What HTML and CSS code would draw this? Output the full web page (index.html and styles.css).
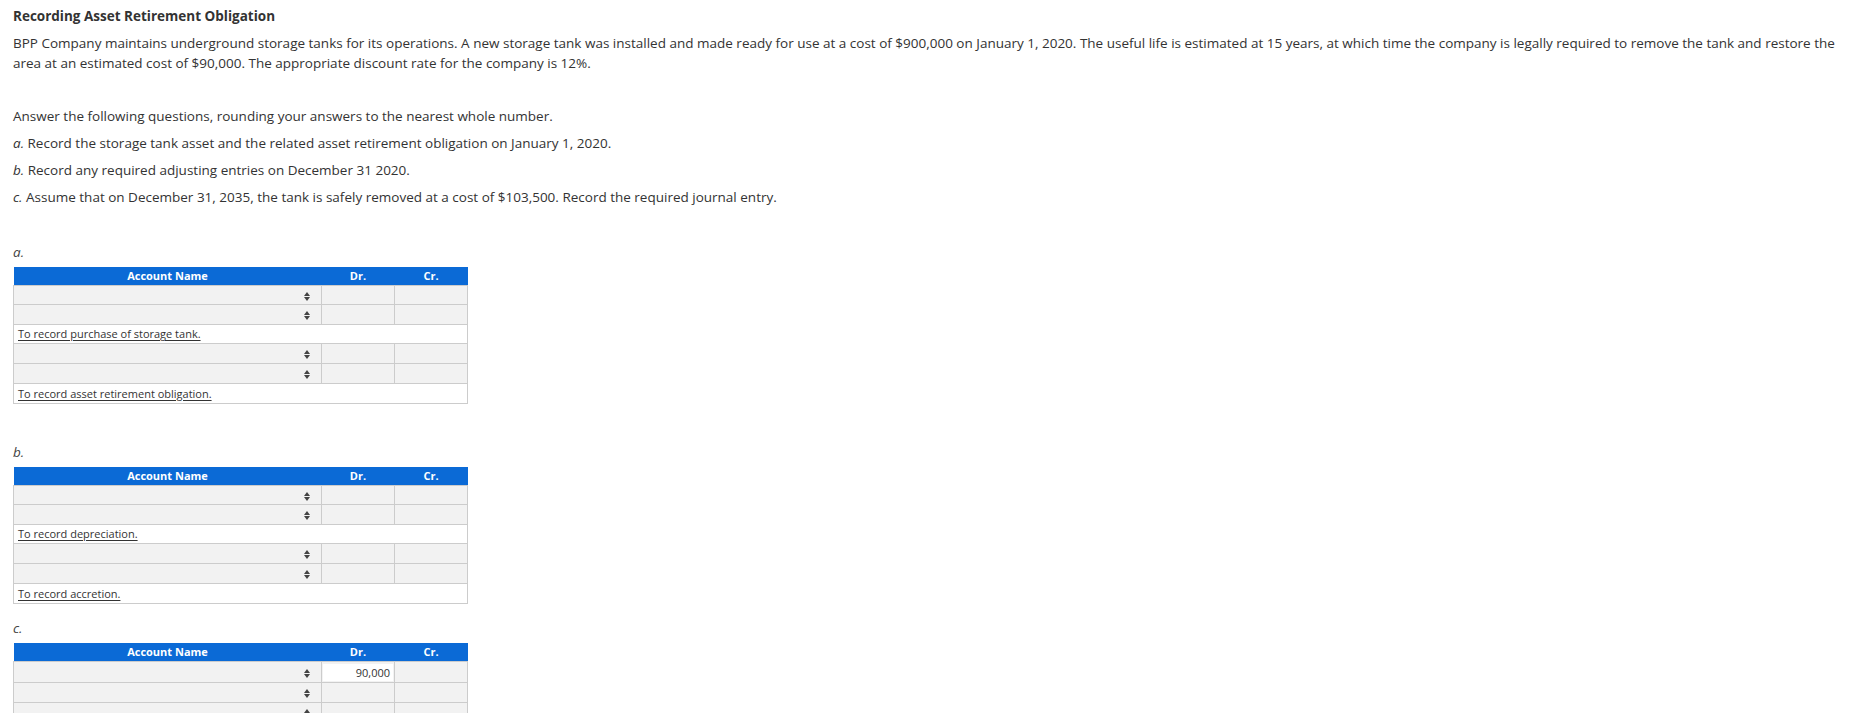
FILE: index.html
```html
<!DOCTYPE html>
<html>
<head>
<meta charset="utf-8">
<link rel="stylesheet" href="styles.css">
</head>
<body>
<div class="page">
  <h1 class="title">Recording Asset Retirement Obligation</h1>
  <p class="intro">BPP Company maintains underground storage tanks for its operations. A new storage tank was installed and made ready for use at a cost of $900,000 on January 1, 2020. The useful life is estimated at 15 years, at which time the company is legally required to remove the tank and restore the area at an estimated cost of $90,000. The appropriate discount rate for the company is 12%.</p>

  <div class="questions">
    <p>Answer the following questions, rounding your answers to the nearest whole number.</p>
    <p><i>a.</i> Record the storage tank asset and the related asset retirement obligation on January 1, 2020.</p>
    <p><i>b.</i> Record any required adjusting entries on December 31 2020.</p>
    <p><i>c.</i> Assume that on December 31, 2035, the tank is safely removed at a cost of $103,500. Record the required journal entry.</p>
  </div>

  <div class="part part-a">
    <div class="part-label">a.</div>
    <table class="journal">
      <thead><tr><th class="c-name">Account Name</th><th class="c-amt">Dr.</th><th class="c-amt">Cr.</th></tr></thead>
      <tbody>
        <tr class="short"><td class="sel"><span class="arrows"></span></td><td></td><td></td></tr>
        <tr><td class="sel"><span class="arrows"></span></td><td></td><td></td></tr>
        <tr class="note short"><td colspan="3"><span>To record purchase of storage tank.</span></td></tr>
        <tr><td class="sel"><span class="arrows"></span></td><td></td><td></td></tr>
        <tr><td class="sel"><span class="arrows"></span></td><td></td><td></td></tr>
        <tr class="note"><td colspan="3"><span>To record asset retirement obligation.</span></td></tr>
      </tbody>
    </table>
  </div>

  <div class="part part-b">
    <div class="part-label">b.</div>
    <table class="journal">
      <thead><tr><th class="c-name">Account Name</th><th class="c-amt">Dr.</th><th class="c-amt">Cr.</th></tr></thead>
      <tbody>
        <tr class="short"><td class="sel"><span class="arrows"></span></td><td></td><td></td></tr>
        <tr><td class="sel"><span class="arrows"></span></td><td></td><td></td></tr>
        <tr class="note short"><td colspan="3"><span>To record depreciation.</span></td></tr>
        <tr><td class="sel"><span class="arrows"></span></td><td></td><td></td></tr>
        <tr><td class="sel"><span class="arrows"></span></td><td></td><td></td></tr>
        <tr class="note"><td colspan="3"><span>To record accretion.</span></td></tr>
      </tbody>
    </table>
  </div>

  <div class="part part-c">
    <div class="part-label">c.</div>
    <table class="journal">
      <thead><tr><th class="c-name">Account Name</th><th class="c-amt">Dr.</th><th class="c-amt">Cr.</th></tr></thead>
      <tbody>
        <tr class="short"><td class="sel"><span class="arrows"></span></td><td class="filled"><span class="val">90,000</span></td><td></td></tr>
        <tr><td class="sel"><span class="arrows"></span></td><td></td><td></td></tr>
        <tr><td class="sel"><span class="arrows"></span></td><td></td><td></td></tr>
        <tr><td class="sel"><span class="arrows"></span></td><td></td><td></td></tr>
      </tbody>
    </table>
  </div>
</div>
</body>
</html>
```

FILE: styles.css
```css
html, body {
  margin: 0;
  padding: 0;
  background: #fff;
}
body {
  font-family: "Open Sans", "Liberation Sans", sans-serif;
  color: #333;
  font-size: 13.5px;
}
.page {
  padding: 6px 13px 0 13px;
}
.title {
  font-size: 13.5px;
  font-weight: 700;
  line-height: 20px;
  margin: 0 0 7px 0;
  color: #333;
}
.intro {
  margin: 0;
  line-height: 20px;
}
.questions {
  margin-top: 33px;
}
.questions p {
  margin: 0 0 7px 0;
  line-height: 20px;
}
.questions p:last-child {
  margin-bottom: 0;
}
.part-label {
  font-style: italic;
  line-height: 20px;
  color: #444;
  margin-bottom: 5px;
}
.part-a { margin-top: 35px; }
.part-b { margin-top: 38px; }
.part-c { margin-top: 14px; }

.journal {
  border-collapse: collapse;
  table-layout: fixed;
  width: 455px;
  font-size: 11px;
}
.journal th {
  background: #0b6ad6;
  color: #fff;
  font-weight: 700;
  height: 18px;
  padding: 0;
  line-height: 18px;
  text-align: center;
}
.journal th.c-name { width: 308px; }
.journal th.c-amt { width: 73px; }
.journal td {
  background: #f2f2f2;
  border: 1px solid #ccc;
  height: 19px;
  padding: 0;
  line-height: 18px;
}
.journal tr.short td {
  height: 18px;
}
.journal td.sel {
  text-align: right;
  padding-right: 11px;
}
.arrows {
  display: inline-block;
  width: 6px;
  height: 9px;
  position: relative;
  vertical-align: middle;
}
.arrows::before,
.arrows::after {
  content: "";
  position: absolute;
  left: 0;
  border-left: 3px solid transparent;
  border-right: 3px solid transparent;
}
.arrows::before {
  top: 0;
  border-bottom: 4px solid #444;
}
.arrows::after {
  bottom: 0;
  border-top: 4px solid #444;
}
.journal tr.note td {
  background: #fff;
  padding-left: 4px;
  color: #333;
}
.journal tr.note span {
  text-decoration: underline;
  text-underline-offset: 2px;
}
.journal td.filled {
  padding: 1px;
}
.journal td.filled .val {
  display: block;
  background: #fff;
  text-align: right;
  padding-right: 3px;
  line-height: 17px;
  color: #333;
}
```
